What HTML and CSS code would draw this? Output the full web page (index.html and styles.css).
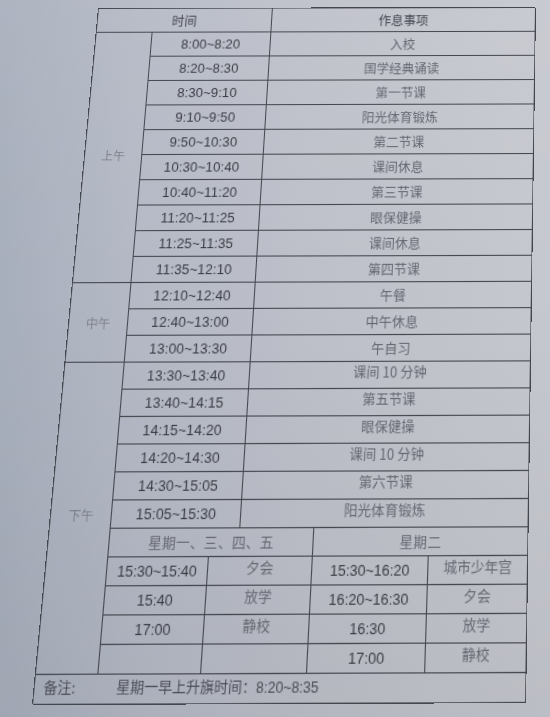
FILE: index.html
```html
<!DOCTYPE html>
<html lang="zh-CN">
<head>
<meta charset="utf-8">
<title>作息时间表</title>
<link rel="stylesheet" href="styles.css">
</head>
<body>
<div class="sheet">
  <div class="c head h1">时间</div>
  <div class="c head h2">作息事项</div>

  <div class="c period am">上午</div>
  <div class="c t">8:00~8:20</div><div class="c a">入校</div>
  <div class="c t">8:20~8:30</div><div class="c a">国学经典诵读</div>
  <div class="c t">8:30~9:10</div><div class="c a">第一节课</div>
  <div class="c t">9:10~9:50</div><div class="c a">阳光体育锻炼</div>
  <div class="c t">9:50~10:30</div><div class="c a">第二节课</div>
  <div class="c t">10:30~10:40</div><div class="c a">课间休息</div>
  <div class="c t">10:40~11:20</div><div class="c a">第三节课</div>
  <div class="c t">11:20~11:25</div><div class="c a">眼保健操</div>
  <div class="c t">11:25~11:35</div><div class="c a">课间休息</div>
  <div class="c t">11:35~12:10</div><div class="c a">第四节课</div>

  <div class="c period noon">中午</div>
  <div class="c t">12:10~12:40</div><div class="c a">午餐</div>
  <div class="c t">12:40~13:00</div><div class="c a">中午休息</div>
  <div class="c t">13:00~13:30</div><div class="c a">午自习</div>

  <div class="c period pm">下午</div>
  <div class="c t">13:30~13:40</div><div class="c a up">课间 10 分钟</div>
  <div class="c t">13:40~14:15</div><div class="c a up">第五节课</div>
  <div class="c t">14:15~14:20</div><div class="c a up">眼保健操</div>
  <div class="c t">14:20~14:30</div><div class="c a up">课间 10 分钟</div>
  <div class="c t">14:30~15:05</div><div class="c a up">第六节课</div>
  <div class="c t">15:05~15:30</div><div class="c a up">阳光体育锻炼</div>

  <div class="c wk wk1">星期一、三、四、五</div>
  <div class="c wk wk2">星期二</div>

  <div class="c wt1">15:30~15:40</div><div class="c wa1 up">夕会</div>
  <div class="c wt2">15:30~16:20</div><div class="c wa2 up">城市少年宫</div>

  <div class="c wt1">15:40</div><div class="c wa1 up">放学</div>
  <div class="c wt2">16:20~16:30</div><div class="c wa2 up">夕会</div>

  <div class="c wt1">17:00</div><div class="c wa1 up">静校</div>
  <div class="c wt2">16:30</div><div class="c wa2 up">放学</div>

  <div class="c wt1"></div><div class="c wa1"></div>
  <div class="c wt2">17:00</div><div class="c wa2 up">静校</div>

  <div class="c note"><span class="note-label">备注:</span><span class="note-text">星期一早上升旗时间：8:20~8:35</span></div>
</div>
</body>
</html>
```

FILE: styles.css
```css
html, body {
  margin: 0;
  padding: 0;
}

body {
  width: 550px;
  height: 717px;
  overflow: hidden;
  background:
    linear-gradient(180deg, rgba(255,255,255,0.06) 0%, rgba(255,255,255,0) 40%, rgba(0,0,0,0.05) 100%),
    linear-gradient(90deg, #a8afbc 0%, #b4b9c5 25%, #bfc1ca 60%, #c6c8cf 100%);
}

.sheet {
  width: 440px;
  height: 624px;
  box-sizing: border-box;
  display: grid;
  grid-template-columns: 56px 92px 27px 68px 106px 91px;
  grid-template-rows: repeat(26, 24px);
  border-top: 1px solid #45474f;
  border-left: 1px solid #45474f;
  transform-origin: 0 0;
  transform: matrix3d(0.994534, -0.0022525, 0, 0.0000025274,
                      -0.111593, 0.987075, 0, -0.000182,
                      0, 0, 1, 0,
                      98, 8, 0, 1);
  font-family: "Liberation Sans", Arial, "Noto Sans CJK SC", sans-serif;
  font-size: 13px;
  color: #3a3c44;
}

.c {
  box-sizing: border-box;
  border-right: 1px solid #45474f;
  border-bottom: 1px solid #45474f;
  display: flex;
  align-items: center;
  justify-content: center;
  white-space: nowrap;
  min-width: 0;
}

.head {
  font-family: "Noto Sans CJK SC", sans-serif;
  font-size: 12.5px;
  color: #44464f;
}
.h1 { grid-column: 1 / 4; }
.h2 { grid-column: 4 / 7; }

.period {
  grid-column: 1;
  font-family: "Noto Sans CJK SC", sans-serif;
  font-size: 11.5px;
  color: #7c7f89;
}
.am { grid-row: span 10; }
.noon { grid-row: span 3; }
.pm { grid-row: span 11; }

.t {
  grid-column: 2 / 4;
  letter-spacing: 0.1px;
}

.a {
  grid-column: 4 / 7;
  font-family: "Noto Sans CJK SC", sans-serif;
  font-size: 12.5px;
  color: #656771;
}

.up {
  padding-bottom: 6px;
}

.wk {
  font-family: "Noto Sans CJK SC", sans-serif;
  font-size: 12.5px;
  letter-spacing: 0.3px;
  color: #656771;
}
.wk1 { grid-column: 2 / 5; }
.wk2 { grid-column: 5 / 7; }

.wt1 { grid-column: 2; }
.wa1 { grid-column: 3 / 5; }
.wt2 { grid-column: 5; }
.wa2 { grid-column: 6; }

.wa1, .wa2 {
  font-family: "Noto Sans CJK SC", sans-serif;
  font-size: 12.5px;
  color: #656771;
}

.note {
  grid-column: 1 / 7;
  justify-content: flex-start;
  padding-left: 8px;
  padding-bottom: 4px;
  font-family: "Noto Sans CJK SC", "Liberation Sans", sans-serif;
  font-size: 12.5px;
  color: #4a4c55;
}
.note-label {
  width: 65px;
}
.note-text {
  font-family: "Liberation Sans", "Noto Sans CJK SC", sans-serif;
}
```
